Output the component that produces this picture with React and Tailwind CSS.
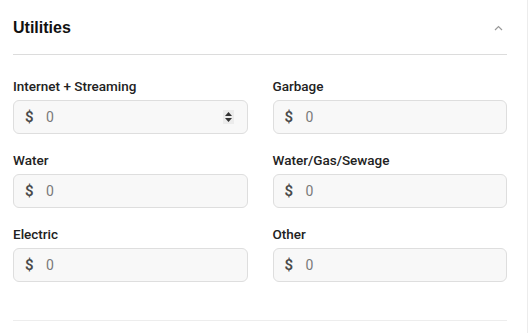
const fields = [
  { label: 'Internet + Streaming', spinner: true },
  { label: 'Garbage' },
  { label: 'Water' },
  { label: 'Water/Gas/Sewage' },
  { label: 'Electric' },
  { label: 'Other' },
];

const MoneyInput = ({ spinner }) => (
  <div className="flex h-[34px] items-center rounded-[6px] border border-[#dedede] bg-[#f8f8f8] pl-[11px] pr-[13px]">
    <span className="w-[21px] text-[15px] font-semibold text-[#4a4a4a]">$</span>
    <span className="flex-1 text-[14px] text-[#7a7a7a]">0</span>
    {spinner && (
      <span className="flex h-[14px] w-[11px] flex-col items-center justify-center gap-[2px] bg-[#ececec]">
        <svg width="7" height="4" viewBox="0 0 7 4"><path d="M3.5 0L7 4H0z" fill="#333" /></svg>
        <svg width="7" height="4" viewBox="0 0 7 4"><path d="M0 0h7L3.5 4z" fill="#333" /></svg>
      </span>
    )}
  </div>
);

export default function App() {
  return (
    <div className="h-[333px] w-[528px] border-r border-[#ececec] bg-white pl-[13px] pr-[20px] font-['Roboto',sans-serif]">
      <div className="flex h-[55px] items-center justify-between border-b border-[#dcdcdc] pr-[4px] pt-[2px]">
        <h2 className="font-['Liberation_Sans',sans-serif] text-[16px] font-bold text-[#111]">Utilities</h2>
        <svg width="9" height="6" viewBox="0 0 9 6" className="mb-[1px]">
          <path d="M1 5L4.5 1.5L8 5" fill="none" stroke="#999" strokeWidth="1.2" />
        </svg>
      </div>
      <div className="grid grid-cols-2 gap-x-[25px] gap-y-[17px] border-b border-[#ededed] pb-[38px] pt-[22px]">
        {fields.map((f) => (
          <div key={f.label}>
            <label className="mb-[5px] block text-[13.5px] font-medium leading-[18px] text-[#222]">{f.label}</label>
            <MoneyInput spinner={f.spinner} />
          </div>
        ))}
      </div>
    </div>
  );
}
